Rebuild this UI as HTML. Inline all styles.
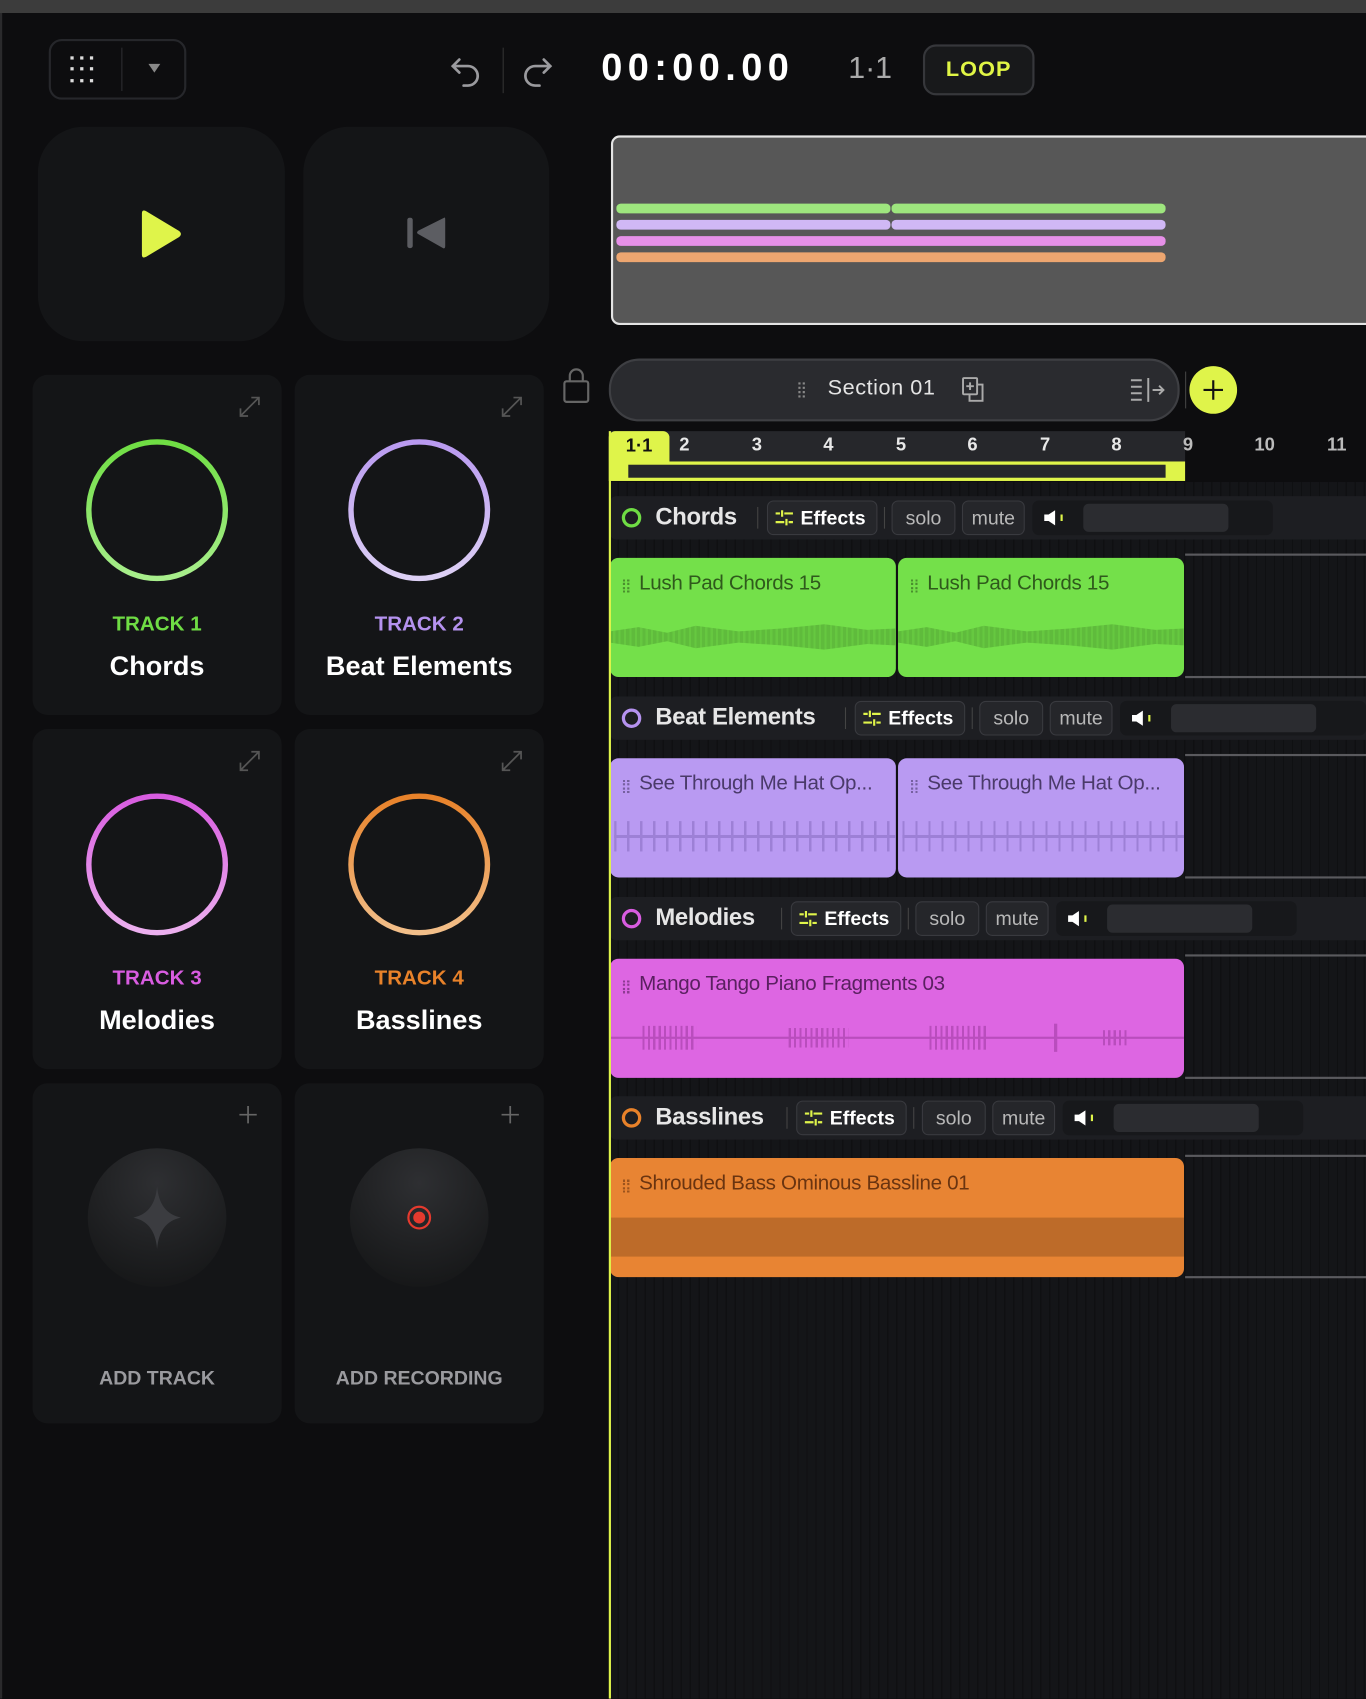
<!DOCTYPE html>
<html><head><meta charset="utf-8"><style>
*{box-sizing:border-box;margin:0;padding:0}
html,body{width:1366px;height:1698px;overflow:hidden;background:#0d0d0f;font-family:"Liberation Sans",sans-serif}
#w{position:absolute;left:0;top:0;width:1261px;height:1568px;transform:scale(1.08327);transform-origin:0 0;background:#0d0d0f}
.a{position:absolute}
.card{position:absolute;background:#141517;border-radius:14px;width:230px;height:314px}
.tl{position:absolute;left:0;width:100%;text-align:center;font-weight:bold}
.hdr{position:absolute;left:563px;width:698px;height:40px;background:#1d1e22;border-radius:6px 0 0 6px}
.hdr .nm{position:absolute;left:42px;top:6px;font-size:22px;font-weight:bold;color:#e6e6e6;letter-spacing:-0.3px}
.btn{position:absolute;top:4px;height:32px;border:1px solid #393a3f;background:#25262a;border-radius:6px;color:#b8b8b8;font-size:18px;line-height:30px;text-align:center}
.clip{position:absolute;height:110px;border-radius:8px;overflow:hidden}
.clip .t{position:absolute;left:27px;top:13px;font-size:19px;letter-spacing:-0.3px}
.clip .d{position:absolute;left:12px;top:20px;height:12px;width:6px;border-left:2px dotted;border-right:2px dotted;opacity:.6}
.rl{position:absolute;height:2px;background:#5a5a5e}
</style></head><body><div id="w">
<div class="a" style="left:0;top:0;width:2px;height:1568px;background:#2a2a2c"></div>
<div class="a" style="left:0;top:0;width:1261px;height:12px;background:#3c3c3c"></div>
<!-- menu -->
<div class="a" style="left:45px;top:36px;width:127px;height:56px;border:2px solid #26272b;border-radius:12px"></div>
<svg class="a" style="left:63px;top:50px" width="32" height="30"><g fill="#ddd"><rect x="2" y="2" width="3" height="3"/><rect x="11" y="2" width="3" height="3"/><rect x="20" y="2" width="3" height="3"/><rect x="2" y="12" width="3" height="3"/><rect x="11" y="12" width="3" height="3"/><rect x="20" y="12" width="3" height="3"/><rect x="2" y="23" width="3" height="3"/><rect x="11" y="23" width="3" height="3"/><rect x="20" y="23" width="3" height="3"/></g></svg>
<div class="a" style="left:112px;top:44px;width:1px;height:40px;background:#2c2d31"></div>
<svg class="a" style="left:136px;top:58px" width="14" height="10"><path d="M1 1h11L6.5 9z" fill="#888"/></svg>
<!-- undo redo -->
<svg class="a" style="left:414px;top:46px" width="36" height="36" fill="none" stroke="#9a9a9e" stroke-width="2.5" stroke-linecap="round"><path d="M10 9 4 15l6 6M4 15h14a9 9 0 0 1 0 18h-4"/></svg>
<div class="a" style="left:464px;top:44px;width:1px;height:42px;background:#333"></div>
<svg class="a" style="left:476px;top:46px" width="36" height="36" fill="none" stroke="#9a9a9e" stroke-width="2.5" stroke-linecap="round"><path d="M26 9l6 6-6 6M32 15H18a9 9 0 0 0 0 18h4"/></svg>
<div class="a" style="left:555px;top:43px;font-size:35px;font-weight:bold;color:#fff;letter-spacing:5px">00:00.00</div>
<div class="a" style="left:783px;top:47px;font-size:28px;color:#aaa">1·1</div>
<div class="a" style="left:852px;top:41px;width:103px;height:47px;border:2px solid #36373b;background:#18191b;border-radius:12px;color:#e0f545;font-weight:bold;font-size:20px;text-align:center;line-height:43px;letter-spacing:1px">LOOP</div>
<!-- transport -->
<div class="a" style="left:35px;top:117px;width:228px;height:198px;background:#141517;border-radius:42px"></div>
<div class="a" style="left:280px;top:117px;width:227px;height:198px;background:#141517;border-radius:42px"></div>
<svg class="a" style="left:128px;top:193px" width="42" height="46"><path d="M3 4Q3 0 7 2L37 20Q41 23 37 26L7 44Q3 46 3 42Z" fill="#dff44a"/></svg>
<svg class="a" style="left:374px;top:199px" width="40" height="32"><rect x="2" y="2" width="5" height="28" rx="2" fill="#5c5d62"/><path d="M36 2Q37 1 37 4V28Q37 31 35 30L12 17Q10 16 12 14Z" fill="#5c5d62"/></svg>
<!-- overview -->
<div class="a" style="left:564px;top:125px;width:720px;height:175px;background:#575757;border:2px solid #e4e4e4;border-radius:8px"></div>
<div class="a" style="left:569px;top:188px;width:253px;height:9px;background:#9ee67e;border-radius:4px"></div>
<div class="a" style="left:823px;top:188px;width:253px;height:9px;background:#9ee67e;border-radius:4px"></div>
<div class="a" style="left:569px;top:203px;width:253px;height:9px;background:#d0b8f5;border-radius:4px"></div>
<div class="a" style="left:823px;top:203px;width:253px;height:9px;background:#d0b8f5;border-radius:4px"></div>
<div class="a" style="left:569px;top:218px;width:507px;height:9px;background:#e690e8;border-radius:4px"></div>
<div class="a" style="left:569px;top:233px;width:507px;height:9px;background:#eda670;border-radius:4px"></div>
<!-- track cards -->
<div class="card" style="left:30px;top:346px"></div><div class="card" style="left:272px;top:346px"></div>
<div class="card" style="left:30px;top:673px"></div><div class="card" style="left:272px;top:673px"></div>
<div class="card" style="left:30px;top:1000px"></div><div class="card" style="left:272px;top:1000px"></div>
<svg class="a" style="left:0;top:0" width="560" height="1340">
<defs>
<linearGradient id="g1" x1="0" y1="0" x2="0" y2="1"><stop offset="0" stop-color="#6fde43"/><stop offset="1" stop-color="#a8ee8c"/></linearGradient>
<linearGradient id="g2" x1="0" y1="0" x2="0" y2="1"><stop offset="0" stop-color="#b99af0"/><stop offset="1" stop-color="#ddd0f5"/></linearGradient>
<linearGradient id="g3" x1="0" y1="0" x2="0" y2="1"><stop offset="0" stop-color="#d85ce0"/><stop offset="1" stop-color="#ecb0ef"/></linearGradient>
<linearGradient id="g4" x1="0" y1="0" x2="0" y2="1"><stop offset="0" stop-color="#e8822a"/><stop offset="1" stop-color="#f2bf8a"/></linearGradient>
<radialGradient id="gd" cx=".5" cy=".25" r=".8"><stop offset="0" stop-color="#2e2f32"/><stop offset="1" stop-color="#151617"/></radialGradient>
</defs>
<circle cx="145" cy="471" r="63" fill="none" stroke="url(#g1)" stroke-width="5"/>
<circle cx="387" cy="471" r="63" fill="none" stroke="url(#g2)" stroke-width="5"/>
<circle cx="145" cy="798" r="63" fill="none" stroke="url(#g3)" stroke-width="5"/>
<circle cx="387" cy="798" r="63" fill="none" stroke="url(#g4)" stroke-width="5"/>
<g stroke="#555" stroke-width="1.6" fill="none">
<path d="M222 384l17-17M232 367h7v7M222 377v7h7"/><path d="M464 384l17-17M474 367h7v7M464 377v7h7"/>
<path d="M222 711l17-17M232 694h7v7M222 704v7h7"/><path d="M464 711l17-17M474 694h7v7M464 704v7h7"/>
<path d="M229 1021v16M221 1029h16M471 1021v16M463 1029h16" stroke="#666"/>
</g>
<circle cx="145" cy="1124" r="64" fill="url(#gd)"/><circle cx="387" cy="1124" r="64" fill="url(#gd)"/>
<path d="M145 1095Q147 1120 167 1124Q147 1128 145 1153Q143 1128 123 1124Q143 1120 145 1095Z" fill="#3b3c40"/>
<circle cx="387" cy="1124" r="10" fill="none" stroke="#e53a2e" stroke-width="2"/><circle cx="387" cy="1124" r="5.5" fill="#e53a2e"/>
<rect x="521" y="352" width="22" height="19" rx="2" fill="none" stroke="#666" stroke-width="2"/><path d="M526 352v-5a6 6 0 0 1 12 0v5" fill="none" stroke="#666" stroke-width="2"/>
</svg>
<div class="a" style="left:30px;top:0;width:230px"><div class="tl" style="top:566px;font-size:19px;color:#6fdc44">TRACK 1</div><div class="tl" style="top:601px;font-size:25px;color:#fff">Chords</div><div class="tl" style="top:893px;font-size:19px;color:#d85ce0">TRACK 3</div><div class="tl" style="top:928px;font-size:25px;color:#fff">Melodies</div><div class="tl" style="top:1262px;font-size:18px;color:#9a9a9e">ADD TRACK</div></div>
<div class="a" style="left:272px;top:0;width:230px"><div class="tl" style="top:566px;font-size:19px;color:#b592ef">TRACK 2</div><div class="tl" style="top:601px;font-size:25px;color:#fff">Beat Elements</div><div class="tl" style="top:893px;font-size:19px;color:#e8822a">TRACK 4</div><div class="tl" style="top:928px;font-size:25px;color:#fff">Basslines</div><div class="tl" style="top:1262px;font-size:18px;color:#9a9a9e">ADD RECORDING</div></div>
<!-- timeline grid -->
<div class="a" style="left:563px;top:445px;width:698px;height:1123px;background:repeating-linear-gradient(90deg,#141518 0 7px,#0f1012 7px 8.3px)"></div>
<div class="a" style="left:562px;top:331px;width:527px;height:58px;background:#2a2b2f;border:2px solid #3e3f43;border-radius:28px"></div>
<div class="a" style="left:737px;top:353px;width:6px;height:14px;border-left:2px dotted #888;border-right:2px dotted #888"></div>
<div class="a" style="left:764px;top:347px;font-size:20px;color:#e4e4e4;letter-spacing:0.5px">Section 01</div>
<svg class="a" style="left:886px;top:347px" width="26" height="26" fill="none" stroke="#aaa" stroke-width="1.8"><rect x="3" y="2" width="13" height="15" rx="1"/><path d="M9.5 6v7M6 9.5h7M16 8h5v15H9v-6"/></svg>
<svg class="a" style="left:1042px;top:347px" width="34" height="26" fill="none" stroke="#aaa" stroke-width="1.8"><path d="M2 4h10M2 10h10M2 16h10M2 22h10M18 2v22M22 13h10M28 9l4 4-4 4"/></svg>
<div class="a" style="left:1094px;top:343px;width:1px;height:34px;background:#444"></div>
<div class="a" style="left:1098px;top:338px;width:44px;height:44px;border-radius:50%;background:#dff44a"></div>
<svg class="a" style="left:1108px;top:348px" width="24" height="24" stroke="#111" stroke-width="2"><path d="M12 3v18M3 12h18"/></svg>
<div class="a" style="left:562px;top:398px;width:532px;height:28px;background:#26272b"></div>
<div class="a" style="left:562px;top:398px;width:56px;height:28px;background:#dff44a;border-radius:6px 6px 0 0;font-size:17px;font-weight:bold;text-align:center;line-height:28px;color:#111">1·1</div>
<div class="a" style="top:401px;left:0;font-size:17px;font-weight:bold;color:#e8e8e8">
<span class="a" style="left:627px">2</span><span class="a" style="left:694px">3</span><span class="a" style="left:760px">4</span><span class="a" style="left:827px">5</span><span class="a" style="left:893px">6</span><span class="a" style="left:960px">7</span><span class="a" style="left:1026px">8</span><span class="a" style="left:1092px;color:#bbb">9</span><span class="a" style="left:1158px;color:#bbb">10</span><span class="a" style="left:1225px;color:#bbb">11</span></div>
<div class="a" style="left:562px;top:426px;width:532px;height:18px;background:#dff44a"></div>
<div class="a" style="left:580px;top:429px;width:496px;height:12px;background:#26272b"></div>
<!-- rails -->
<div class="rl" style="left:1094px;top:511px;width:167px"></div><div class="rl" style="left:1094px;top:624px;width:167px"></div>
<div class="rl" style="left:1094px;top:696px;width:167px"></div><div class="rl" style="left:1094px;top:809px;width:167px"></div>
<div class="rl" style="left:1094px;top:881px;width:167px"></div><div class="rl" style="left:1094px;top:994px;width:167px"></div>
<div class="rl" style="left:1094px;top:1066px;width:167px"></div><div class="rl" style="left:1094px;top:1178px;width:167px"></div>
<!-- headers -->
<div class="hdr" style="top:458px"><svg class="a" style="left:10px;top:10px" width="20" height="20"><circle cx="10" cy="10" r="7.5" fill="none" stroke="#6fdc44" stroke-width="3"/></svg><div class="nm">Chords</div><div class="a" style="left:136px;top:10px;width:1px;height:20px;background:#444"></div><div class="btn" style="left:145px;width:102px;color:#fff;font-weight:bold">&nbsp;&nbsp;&nbsp;&nbsp;Effects</div><svg class="a" style="left:152px;top:12px" width="18" height="16" stroke="#dff44a" stroke-width="2"><path d="M1 4h4M9 4h8M7 1v6M1 12h8M13 12h4M11 9v6"/></svg><div class="a" style="left:253px;top:10px;width:1px;height:20px;background:#444"></div><div class="btn" style="left:260px;width:59px">solo</div><div class="btn" style="left:325px;width:58px">mute</div><div class="a" style="left:390px;top:4px;width:222px;height:32px;background:#17181b;border-radius:6px"></div><svg class="a" style="left:400px;top:12px" width="26" height="16"><path d="M1 5h4l6-4v14l-6-4H1z" fill="#fff"/><path d="M17 5v6" stroke="#dff44a" stroke-width="2"/></svg><div class="a" style="left:437px;top:7px;width:134px;height:26px;background:#2b2c30;border-radius:5px"></div></div>
<div class="hdr" style="top:643px"><svg class="a" style="left:10px;top:10px" width="20" height="20"><circle cx="10" cy="10" r="7.5" fill="none" stroke="#b592ef" stroke-width="3"/></svg><div class="nm">Beat Elements</div><div class="a" style="left:217px;top:10px;width:1px;height:20px;background:#444"></div><div class="btn" style="left:226px;width:102px;color:#fff;font-weight:bold">&nbsp;&nbsp;&nbsp;&nbsp;Effects</div><svg class="a" style="left:233px;top:12px" width="18" height="16" stroke="#dff44a" stroke-width="2"><path d="M1 4h4M9 4h8M7 1v6M1 12h8M13 12h4M11 9v6"/></svg><div class="a" style="left:334px;top:10px;width:1px;height:20px;background:#444"></div><div class="btn" style="left:341px;width:59px">solo</div><div class="btn" style="left:406px;width:58px">mute</div><div class="a" style="left:471px;top:4px;width:227px;height:32px;background:#17181b;border-radius:6px"></div><svg class="a" style="left:481px;top:12px" width="26" height="16"><path d="M1 5h4l6-4v14l-6-4H1z" fill="#fff"/><path d="M17 5v6" stroke="#dff44a" stroke-width="2"/></svg><div class="a" style="left:518px;top:7px;width:134px;height:26px;background:#2b2c30;border-radius:5px"></div></div>
<div class="hdr" style="top:828px"><svg class="a" style="left:10px;top:10px" width="20" height="20"><circle cx="10" cy="10" r="7.5" fill="none" stroke="#d85ce0" stroke-width="3"/></svg><div class="nm">Melodies</div><div class="a" style="left:158px;top:10px;width:1px;height:20px;background:#444"></div><div class="btn" style="left:167px;width:102px;color:#fff;font-weight:bold">&nbsp;&nbsp;&nbsp;&nbsp;Effects</div><svg class="a" style="left:174px;top:12px" width="18" height="16" stroke="#dff44a" stroke-width="2"><path d="M1 4h4M9 4h8M7 1v6M1 12h8M13 12h4M11 9v6"/></svg><div class="a" style="left:275px;top:10px;width:1px;height:20px;background:#444"></div><div class="btn" style="left:282px;width:59px">solo</div><div class="btn" style="left:347px;width:58px">mute</div><div class="a" style="left:412px;top:4px;width:222px;height:32px;background:#17181b;border-radius:6px"></div><svg class="a" style="left:422px;top:12px" width="26" height="16"><path d="M1 5h4l6-4v14l-6-4H1z" fill="#fff"/><path d="M17 5v6" stroke="#dff44a" stroke-width="2"/></svg><div class="a" style="left:459px;top:7px;width:134px;height:26px;background:#2b2c30;border-radius:5px"></div></div>
<div class="hdr" style="top:1012px"><svg class="a" style="left:10px;top:10px" width="20" height="20"><circle cx="10" cy="10" r="7.5" fill="none" stroke="#e8822a" stroke-width="3"/></svg><div class="nm">Basslines</div><div class="a" style="left:163px;top:10px;width:1px;height:20px;background:#444"></div><div class="btn" style="left:172px;width:102px;color:#fff;font-weight:bold">&nbsp;&nbsp;&nbsp;&nbsp;Effects</div><svg class="a" style="left:179px;top:12px" width="18" height="16" stroke="#dff44a" stroke-width="2"><path d="M1 4h4M9 4h8M7 1v6M1 12h8M13 12h4M11 9v6"/></svg><div class="a" style="left:280px;top:10px;width:1px;height:20px;background:#444"></div><div class="btn" style="left:288px;width:59px">solo</div><div class="btn" style="left:353px;width:58px">mute</div><div class="a" style="left:418px;top:4px;width:222px;height:32px;background:#17181b;border-radius:6px"></div><svg class="a" style="left:428px;top:12px" width="26" height="16"><path d="M1 5h4l6-4v14l-6-4H1z" fill="#fff"/><path d="M17 5v6" stroke="#dff44a" stroke-width="2"/></svg><div class="a" style="left:465px;top:7px;width:134px;height:26px;background:#2b2c30;border-radius:5px"></div></div>
<!-- clips -->
<div class="clip" style="left:563px;top:515px;width:264px;background:#74e04a;color:#2f5a1c"><div class="d"></div><div class="t">Lush Pad Chords 15</div><div class="a" style="left:0;top:60px;width:100%;height:26px;background:repeating-linear-gradient(90deg,#5fbb3c 0 3px,#66c840 3px 5px);clip-path:polygon(0 30%,10% 15%,20% 35%,30% 10%,45% 30%,60% 20%,75% 5%,90% 25%,100% 20%,100% 80%,90% 75%,75% 95%,60% 80%,45% 70%,30% 90%,20% 65%,10% 85%,0 70%)"></div></div>
<div class="clip" style="left:829px;top:515px;width:264px;background:#74e04a;color:#2f5a1c"><div class="d"></div><div class="t">Lush Pad Chords 15</div><div class="a" style="left:0;top:60px;width:100%;height:26px;background:repeating-linear-gradient(90deg,#5fbb3c 0 3px,#66c840 3px 5px);clip-path:polygon(0 30%,10% 15%,20% 35%,30% 10%,45% 30%,60% 20%,75% 5%,90% 25%,100% 20%,100% 80%,90% 75%,75% 95%,60% 80%,45% 70%,30% 90%,20% 65%,10% 85%,0 70%)"></div></div>
<div class="clip" style="left:563px;top:700px;width:264px;background:#b99af2;color:#4a3a6a"><div class="d"></div><div class="t">See Through Me Hat Op...</div><div class="a" style="left:4px;top:58px;width:100%;height:28px;background:repeating-linear-gradient(90deg,#9d80d6 0 2px,transparent 2px 12px),linear-gradient(#0000 45%,#9d80d6 45% 55%,#0000 55%)"></div></div>
<div class="clip" style="left:829px;top:700px;width:264px;background:#b99af2;color:#4a3a6a"><div class="d"></div><div class="t">See Through Me Hat Op...</div><div class="a" style="left:4px;top:58px;width:100%;height:28px;background:repeating-linear-gradient(90deg,#9d80d6 0 2px,transparent 2px 12px),linear-gradient(#0000 45%,#9d80d6 45% 55%,#0000 55%)"></div></div>
<div class="clip" style="left:563px;top:885px;width:530px;background:#dd66e2;color:#5a2060"><div class="d"></div><div class="t">Mango Tango Piano Fragments 03</div><div class="a" style="left:0;top:72px;width:100%;height:2px;background:#b94dbd"></div>
<div class="a" style="left:30px;top:62px;width:50px;height:22px;background:repeating-linear-gradient(90deg,#b94dbd 0 2px,transparent 2px 5px)"></div><div class="a" style="left:165px;top:64px;width:55px;height:18px;background:repeating-linear-gradient(90deg,#b94dbd 0 2px,transparent 2px 5px)"></div><div class="a" style="left:295px;top:62px;width:55px;height:22px;background:repeating-linear-gradient(90deg,#b94dbd 0 2px,transparent 2px 5px)"></div><div class="a" style="left:410px;top:60px;width:3px;height:26px;background:#b94dbd"></div><div class="a" style="left:455px;top:66px;width:25px;height:14px;background:repeating-linear-gradient(90deg,#b94dbd 0 2px,transparent 2px 5px)"></div></div>
<div class="clip" style="left:563px;top:1069px;width:530px;background:#e88433;color:#6a3410"><div class="d"></div><div class="t">Shrouded Bass Ominous Bassline 01</div><div class="a" style="left:0;top:55px;width:100%;height:36px;background:#bd6b29"></div></div>
<!-- playhead -->
<div class="a" style="left:562px;top:398px;width:2px;height:1170px;background:#dff44a"></div>
</div></body></html>
